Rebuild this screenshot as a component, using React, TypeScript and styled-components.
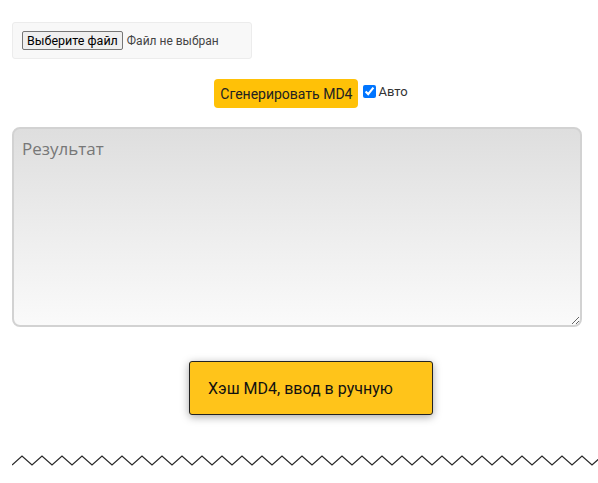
import React from 'react';
import styled, {createGlobalStyle} from 'styled-components';

const GlobalStyle = createGlobalStyle`
  html, body {
    margin: 0;
    padding: 0;
    background: #fff;
  }
  body {
    font-family: Roboto, "Liberation Sans", Arial, sans-serif;
    color: #222;
  }
`;

const Page = styled.div`
  width: 598px;
  padding: 22px 0 0 12px;
  box-sizing: border-box;
  display: flex;
  flex-direction: column;
`;

const FileBox = styled.label`
  display: flex;
  align-items: center;
  gap: 4px;
  width: 240px;
  height: 37px;
  box-sizing: border-box;
  padding: 0 9px;
  background: #f8f8f8;
  border: 1px solid #ececec;
  border-radius: 3px;
  font-size: 13px;
  input {
    display: none;
  }
`;

const FileButton = styled.span`
  display: inline-flex;
  align-items: center;
  height: 19px;
  padding: 0 4px;
  box-sizing: border-box;
  background: #efefef;
  border: 1px solid #767676;
  border-radius: 2px;
  color: #000;
  font-size: 12.5px;
`;

const FileName = styled.span`
  color: #444;
  font-size: 12px;
`;

const CenterRow = styled.div<{$top: number}>`
  display: flex;
  justify-content: center;
  align-items: flex-start;
  padding-left: 12px;
  margin-top: ${({$top}) => $top}px;
`;

const GenButton = styled.button`
  height: 29px;
  padding: 0 6px;
  border: none;
  border-radius: 4px;
  background: #ffc107;
  color: #222;
  font-family: inherit;
  font-size: 14px;
  cursor: pointer;
`;

const AutoLabel = styled.label`
  display: flex;
  align-items: center;
  margin-top: 5px;
  font-size: 13px;
  color: #333;
  input {
    width: 13px;
    height: 13px;
    margin: 0 2px 0 5px;
    accent-color: #0075ff;
  }
`;

const Result = styled.textarea`
  margin-top: 19px;
  width: 570px;
  height: 200px;
  box-sizing: border-box;
  padding: 8px 8px;
  border: 2px solid #d2d2d2;
  border-radius: 8px;
  background: linear-gradient(#dedede 0%, #ebebeb 45%, #fafafa 100%);
  font-family: "Open Sans", "Noto Sans", sans-serif;
  font-size: 17px;
  color: #333;
  outline: none;
  &::placeholder {
    color: #777;
  }
`;

const ManualButton = styled.button`
  width: 244px;
  height: 54px;
  box-sizing: border-box;
  padding: 0 0 0 18px;
  text-align: left;
  background: #ffc41a;
  border: 1px solid #222;
  border-radius: 3px;
  box-shadow: 0 2px 8px rgba(0, 0, 0, 0.35);
  color: #111;
  font-family: inherit;
  font-size: 16px;
  cursor: pointer;
`;

const Zigzag = styled.svg`
  display: block;
  margin-top: 39px;
  width: 586px;
  height: 14px;
`;

const zigPoints = () => {
  const pts: string[] = [];
  for (let x = 0; x <= 600; x += 10) {
    const y = (x / 10) % 2 === 0 ? 11 : 2;
    pts.push(`${x},${y}`);
  }
  return pts.join(' ');
};

export default function App() {
  const [auto, setAuto] = React.useState(true);
  return (
    <>
      <GlobalStyle />
      <Page>
        <FileBox>
          <input type="file" />
          <FileButton>Выберите файл</FileButton>
          <FileName>Файл не выбран</FileName>
        </FileBox>
        <CenterRow $top={20}>
          <GenButton>Сгенерировать MD4</GenButton>
          <AutoLabel>
            <input
              type="checkbox"
              checked={auto}
              onChange={() => setAuto(!auto)}
            />
            Авто
          </AutoLabel>
        </CenterRow>
        <Result placeholder="Результат" />
        <CenterRow $top={34}>
          <ManualButton>Хэш MD4, ввод в ручную</ManualButton>
        </CenterRow>
        <Zigzag viewBox="0 0 586 14" preserveAspectRatio="none">
          <polyline
            points={zigPoints()}
            fill="none"
            stroke="#2a2a2a"
            strokeWidth="1.3"
          />
        </Zigzag>
      </Page>
    </>
  );
}
